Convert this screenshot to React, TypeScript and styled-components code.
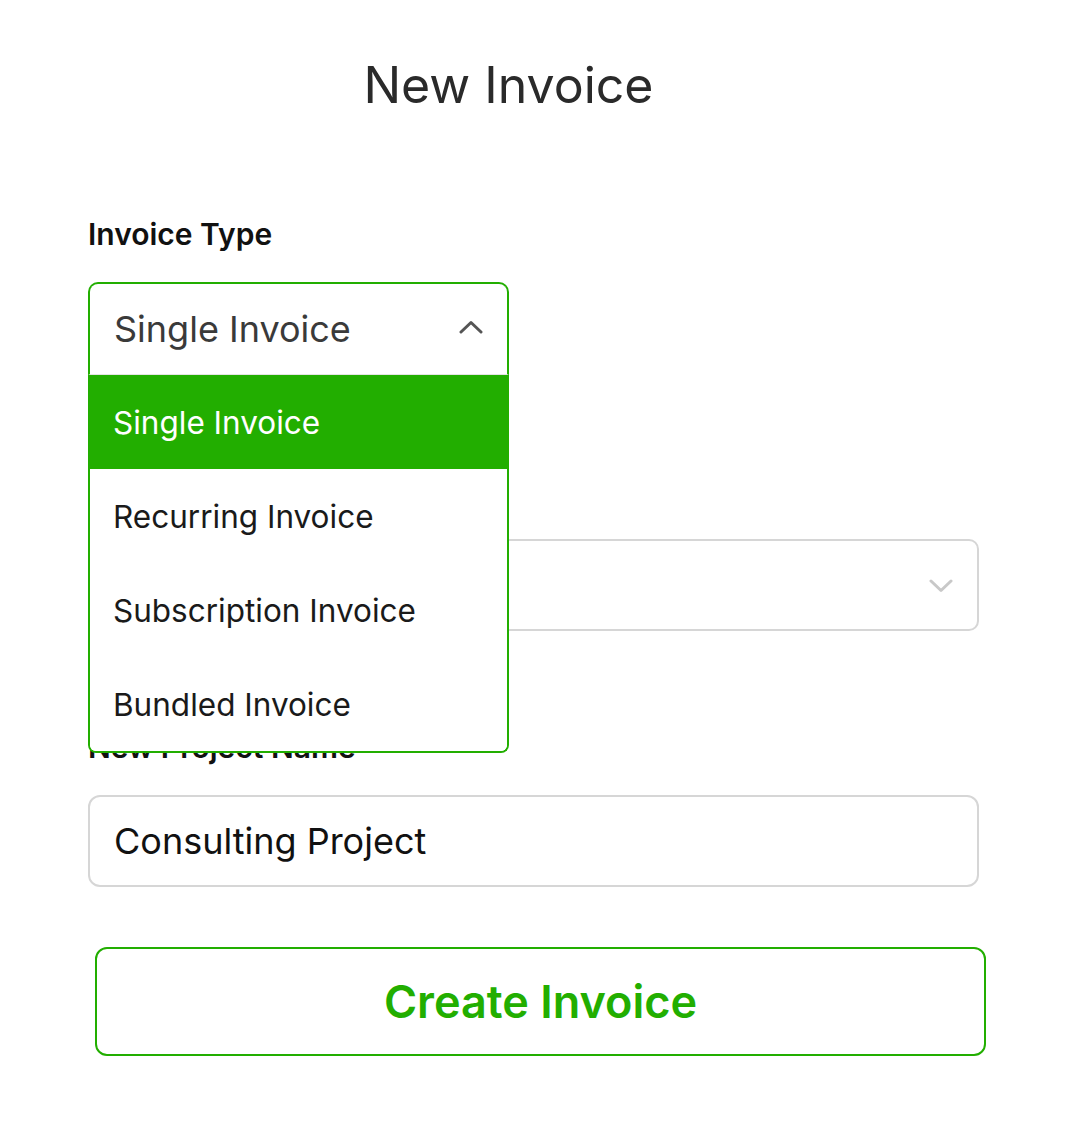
import React from 'react'
import styled, { createGlobalStyle } from 'styled-components'

const GREEN = '#22ae00'

const GlobalStyle = createGlobalStyle`
  body {
    margin: 0;
    background: #ffffff;
    font-family: Inter, 'Liberation Sans', sans-serif;
  }
`

const invoiceTypes = ['Single Invoice', 'Recurring Invoice', 'Subscription Invoice', 'Bundled Invoice']

const Chevron: React.FC<{ up?: boolean; color: string }> = ({ up, color }) => (
  <svg width="24" height="14" viewBox="0 0 24 14" fill="none">
    <polyline
      points={up ? '2,12 12,2.5 22,12' : '2,2 12,11.5 22,2'}
      stroke={color}
      strokeWidth="3"
      strokeLinecap="round"
      strokeLinejoin="round"
    />
  </svg>
)

const App: React.FC = () => {
  const selected = 'Single Invoice'
  return (
    <Page>
      <GlobalStyle />
      <Title>New Invoice</Title>

      <Form>
        <Fields>
          <Field>
            <Label>Invoice Type</Label>
            <SelectWrap $width="421px">
              <SelectBox $open>
                <SelectValue>{selected}</SelectValue>
                <Chevron up color="#555555" />
              </SelectBox>
              <Menu>
                {invoiceTypes.map((t) => (
                  <MenuItem key={t} $active={t === selected}>{t}</MenuItem>
                ))}
              </Menu>
            </SelectWrap>
          </Field>

          <Field>
            <Label>Client</Label>
            <SelectWrap>
              <SelectBox>
                <SelectValue />
                <Chevron color="#c8c8c8" />
              </SelectBox>
            </SelectWrap>
          </Field>

          <Field>
            <Label>New Project Name</Label>
            <TextInput defaultValue="Consulting Project" />
          </Field>
        </Fields>

        <CreateButton type="button">Create Invoice</CreateButton>
      </Form>
    </Page>
  )
}

export default App

const Page = styled.div`
  width: 1080px;
  box-sizing: border-box;
  padding: 52px 101px 76px 88px;
`

const Title = styled.h1`
  margin: 0 50px 0 0;
  text-align: center;
  font-size: 50px;
  line-height: 66px;
  font-weight: 400;
  color: #2a2a2a;
`

const Form = styled.div`
  display: flex;
  flex-direction: column;
  gap: 60px;
  margin-top: 99px;
`

const Fields = styled.div`
  display: flex;
  flex-direction: column;
  gap: 99px;
`

const Field = styled.div`
  display: flex;
  flex-direction: column;
  gap: 31px;
`

const Label = styled.div`
  font-size: 30px;
  line-height: 34px;
  font-weight: 600;
  color: #111111;
`

const SelectWrap = styled.div<{ $width?: string }>`
  position: relative;
  width: ${(p) => p.$width ?? '100%'};
`

const SelectBox = styled.div<{ $open?: boolean }>`
  box-sizing: border-box;
  height: ${(p) => (p.$open ? '93px' : '92px')};
  display: flex;
  align-items: center;
  justify-content: space-between;
  padding: 0 24px 0 24px;
  background: #ffffff;
  border: 2px solid ${(p) => (p.$open ? GREEN : '#d6d6d6')};
  border-bottom: ${(p) => (p.$open ? '1px solid #e4e4e4' : '2px solid #d6d6d6')};
  border-radius: ${(p) => (p.$open ? '10px 10px 0 0' : '10px')};

  svg {
    margin-top: ${(p) => (p.$open ? '-4px' : '2px')};
  }
`

const SelectValue = styled.span`
  font-size: 36px;
  color: #3a3a3a;
`

const Menu = styled.ul`
  position: absolute;
  top: 100%;
  left: 0;
  right: 0;
  z-index: 10;
  margin: 0;
  padding: 0;
  list-style: none;
  background: #ffffff;
  border: 2px solid ${GREEN};
  border-top: none;
  border-radius: 0 0 8px 8px;
  overflow: hidden;
`

const MenuItem = styled.li<{ $active?: boolean }>`
  height: 94px;
  display: flex;
  align-items: center;
  padding: 0 23px;
  font-size: 31.5px;
  color: ${(p) => (p.$active ? '#ffffff' : '#1a1a1a')};
  background: ${(p) => (p.$active ? GREEN : '#ffffff')};
`

const TextInput = styled.input`
  box-sizing: border-box;
  width: 100%;
  height: 92px;
  padding: 0 24px;
  border: 2px solid #d6d6d6;
  border-radius: 12px;
  font-family: inherit;
  font-size: 36px;
  color: #111111;
  outline: none;
`

const CreateButton = styled.button`
  box-sizing: border-box;
  width: 891px;
  height: 109px;
  margin-left: 7px;
  background: #ffffff;
  border: 2px solid ${GREEN};
  border-radius: 12px;
  font-family: inherit;
  font-size: 45px;
  font-weight: 600;
  color: ${GREEN};
  cursor: pointer;
`
